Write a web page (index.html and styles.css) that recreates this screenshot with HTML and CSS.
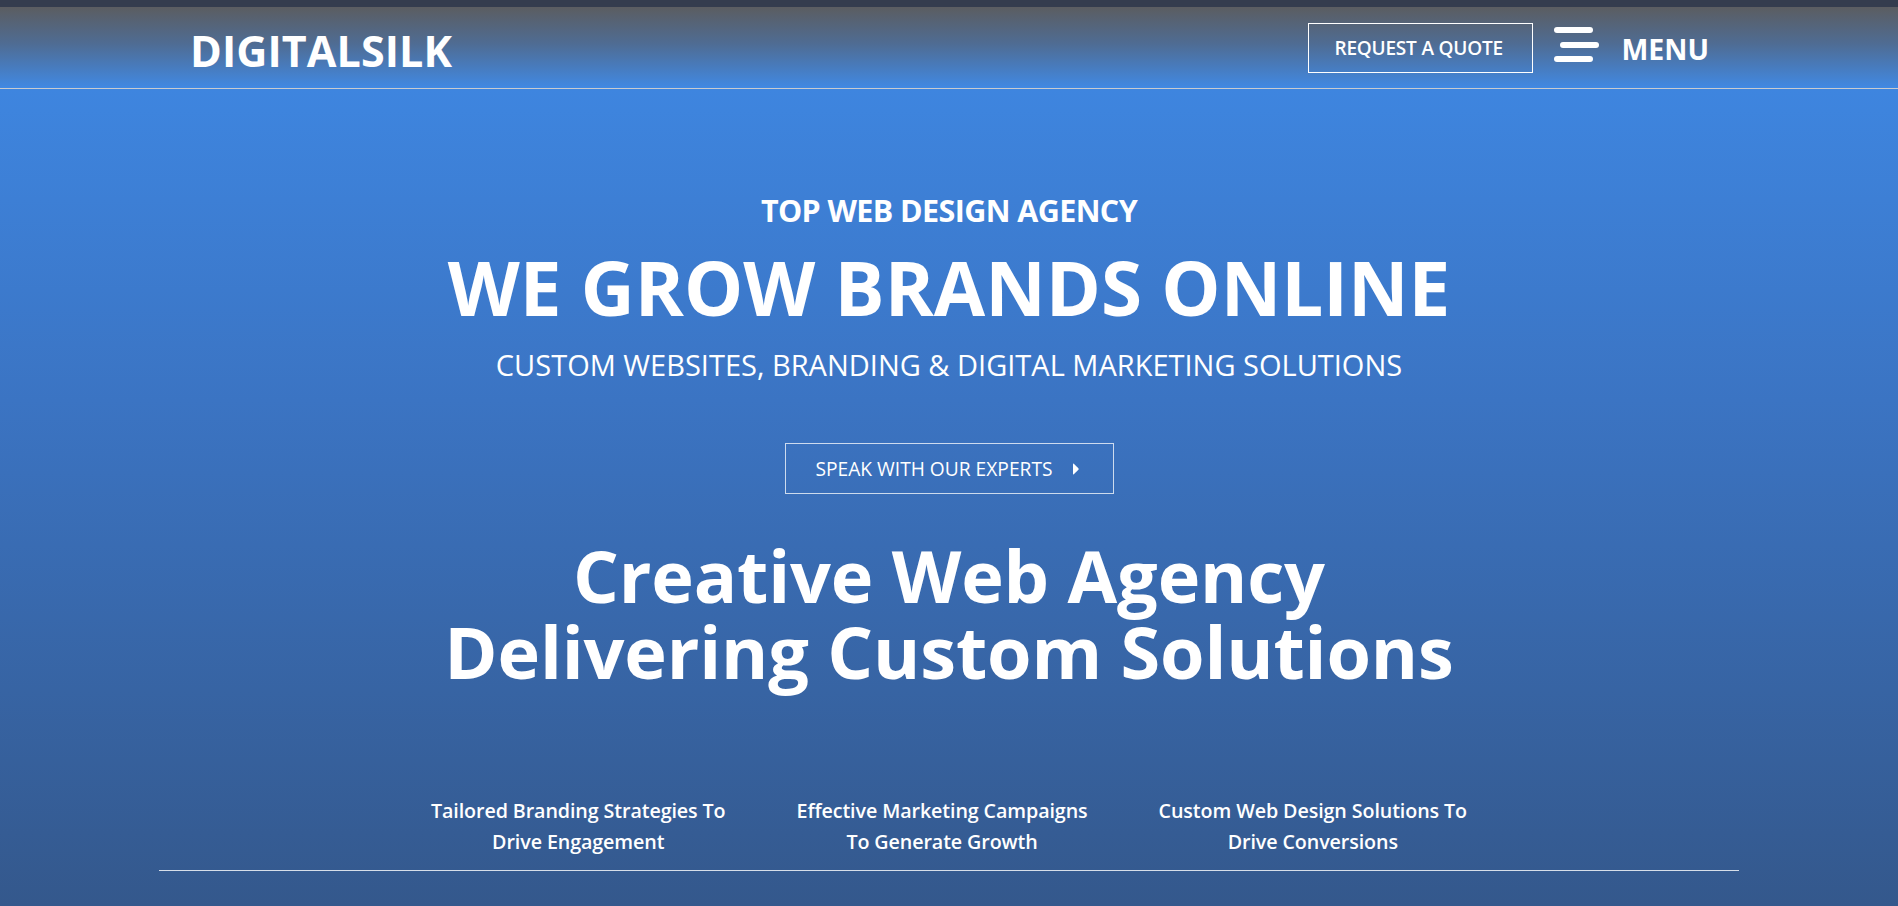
FILE: index.html
```html
<!DOCTYPE html>
<html lang="en">
<head>
<meta charset="utf-8">
<title>Digital Silk</title>
<link rel="stylesheet" href="styles.css">
</head>
<body>
<div class="page">
  <div class="topbar"></div>
  <header class="header">
    <div class="header-inner">
      <div class="logo">DIGITALSILK</div>
      <div class="header-actions">
        <a class="quote-btn" href="#">REQUEST A QUOTE</a>
        <div class="burger"><span></span><span class="mid"></span><span></span></div>
        <div class="menu-label">MENU</div>
      </div>
    </div>
  </header>
  <main class="hero">
    <div class="eyebrow">TOP WEB DESIGN AGENCY</div>
    <h1 class="title">WE GROW BRANDS ONLINE</h1>
    <div class="subtitle">CUSTOM WEBSITES, BRANDING &amp; DIGITAL MARKETING SOLUTIONS</div>
    <a class="cta" href="#"><span class="cta-text">SPEAK WITH OUR EXPERTS</span>
      <svg class="cta-arrow" width="7" height="12" viewBox="0 0 7 12"><path d="M1 1.2 Q1 0.2 1.8 0.8 L6.4 5.3 Q7 6 6.4 6.7 L1.8 11.2 Q1 11.8 1 10.8 Z" fill="#fff"/></svg>
    </a>
    <h2 class="headline">Creative Web Agency<br>Delivering Custom Solutions</h2>
    <div class="features">
      <div class="feature">Tailored Branding Strategies To<br>Drive Engagement</div>
      <div class="feature">Effective Marketing Campaigns<br>To Generate Growth</div>
      <div class="feature">Custom Web Design Solutions To<br>Drive Conversions</div>
    </div>
    <div class="divider"></div>
  </main>
</div>
</body>
</html>
```
FILE: styles.css
```css
html, body {
  margin: 0;
  padding: 0;
}
body {
  font-family: "Open Sans", "Noto Sans", sans-serif;
  color: #fff;
  background: #33568a;
}
.page {
  height: 906px;
  overflow: hidden;
  background: linear-gradient(180deg, #3f8ae7 0px, #3b74c3 400px, #34588c 906px);
}
.topbar {
  height: 7px;
  background: #343c4e;
}
.header {
  height: 81px;
  border-bottom: 1px solid #c9cbcf;
  background: linear-gradient(180deg, #5b5d61 0%, #4f6c93 45%, #4189e3 100%);
}
.header-inner {
  width: 1520px;
  height: 100%;
  margin: 0 auto;
  display: flex;
  align-items: center;
  justify-content: space-between;
}
.logo {
  font-size: 43px;
  line-height: 1;
  font-weight: 700;
  letter-spacing: 0.1px;
  margin-top: 6px;
  margin-left: 1px;
}
.header-actions {
  display: flex;
  align-items: center;
}
.quote-btn {
  display: block;
  color: #fff;
  text-decoration: none;
  border: 1px solid #fff;
  font-size: 19px;
  line-height: 1;
  font-weight: 600;
  letter-spacing: -0.2px;
  white-space: nowrap;
  padding: 15px 24px 14px 25px;
  width: 174px;
  margin-top: 1px;
}
.burger {
  width: 45px;
  margin-left: 21px;
  display: flex;
  flex-direction: column;
  gap: 8.5px;
  margin-bottom: 6px;
}
.burger span {
  display: block;
  width: 39px;
  height: 6px;
  border-radius: 3px;
  background: #fff;
}
.burger .mid {
  margin-left: 6px;
}
.menu-label {
  margin-left: 22px;
  font-size: 28.5px;
  line-height: 1;
  font-weight: 700;
  margin-top: 3px;
}
.hero {
  display: flex;
  flex-direction: column;
  align-items: center;
  text-align: center;
  padding-top: 106px;
}
.eyebrow {
  font-size: 30.5px;
  line-height: 30px;
  font-weight: 700;
  letter-spacing: -0.6px;
}
.title {
  margin: 25px 0 0;
  font-size: 74.5px;
  line-height: 74.5px;
  font-weight: 700;
}
.subtitle {
  margin-top: 25px;
  font-size: 29px;
  line-height: 29.5px;
  font-weight: 400;
}
.cta {
  margin-top: 64px;
  display: flex;
  align-items: center;
  gap: 19px;
  color: #fff;
  text-decoration: none;
  border: 1px solid rgba(255, 255, 255, 0.75);
  font-size: 19.2px;
  line-height: 1;
  white-space: nowrap;
  padding: 15px 34px 15px 30px;
}
.cta-arrow {
  flex: none;
  margin-top: 1px;
}
.headline {
  margin: 43px 0 0;
  font-size: 72px;
  line-height: 76px;
  font-weight: 700;
  letter-spacing: -0.15px;
}
.features {
  margin-top: 106px;
  display: flex;
  gap: 71px;
  justify-content: center;
}
.feature {
  font-size: 19.7px;
  line-height: 31px;
  font-weight: 600;
  letter-spacing: -0.1px;
}
.divider {
  margin-top: 13px;
  width: 1580px;
  height: 1px;
  background: rgba(255, 255, 255, 0.8);
}
```
